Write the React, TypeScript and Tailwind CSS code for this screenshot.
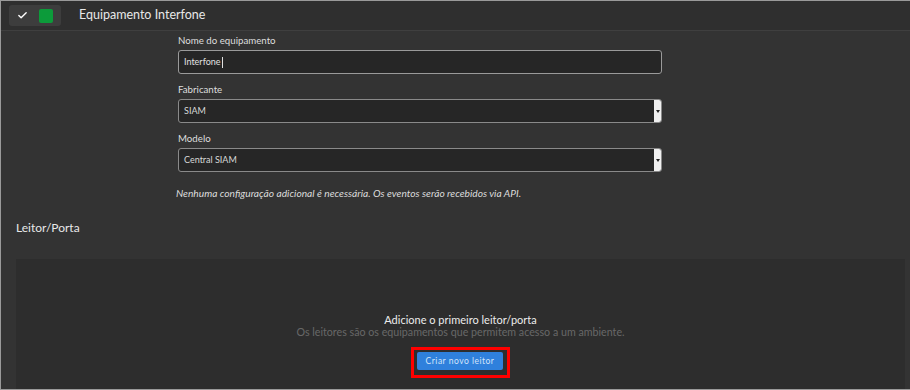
import { Check } from 'lucide-react';

function SelectField({ value }: { value: string }) {
  return (
    <div className="flex h-[24px] items-stretch rounded-[3px] border border-[#8a8a8a] bg-[#262626]">
      <div className="flex flex-1 items-center px-[5px] text-[9px] text-[#d8d8d8]">{value}</div>
      <div className="flex w-[7px] items-center justify-center rounded-r-[2px] bg-[#f0f0f0]">
        <div className="h-0 w-0 border-x-[2px] border-t-[3px] border-x-transparent border-t-[#222]"></div>
      </div>
    </div>
  );
}

export default function App() {
  return (
    <div
      className="flex h-[390px] w-[910px] flex-col overflow-hidden border-l border-t border-b border-[#9a9a9a] bg-[#333333] text-[#e6e6e6]"
      style={{ fontFamily: 'Lato, "Open Sans", sans-serif' }}
    >
      {/* Header */}
      <div className="flex h-[30px] shrink-0 items-center gap-[18px] border-b border-[#3f3f3f] bg-[#2f2f2f] pl-[8px]">
        <div className="flex h-[21px] w-[52px] items-center gap-[11px] rounded-[3px] bg-[#3d3d3d] pl-[8px]">
          <Check className="h-[11px] w-[11px] text-white" strokeWidth={3} />
          <div className="h-[14px] w-[14px] rounded-[2px] bg-[#0c9b3a]"></div>
        </div>
        <span className="text-[12.5px] text-[#e8e8e8]">Equipamento Interfone</span>
      </div>

      {/* Form */}
      <div className="ml-[177px] flex w-[484px] flex-col pt-[2px]">
        <label className="text-[9.7px] leading-[14px] text-[#dedede]">Nome do equipamento</label>
        <div className="mt-[3px] flex h-[24px] items-center rounded-[3px] border border-[#9a9a9a] bg-[#262626] px-[5px] text-[9px] text-[#e0e0e0]">
          Interfone<span className="ml-[1px] h-[11px] w-px bg-[#e0e0e0]"></span>
        </div>
        <label className="mt-[8px] text-[9.7px] leading-[14px] text-[#dedede]">Fabricante</label>
        <div className="mt-[3px]">
          <SelectField value="SIAM" />
        </div>
        <label className="mt-[8px] text-[9.7px] leading-[14px] text-[#dedede]">Modelo</label>
        <div className="mt-[3px]">
          <SelectField value="Central SIAM" />
        </div>
        <p className="-ml-[2px] mt-[15px] text-[10.2px] leading-[13px] italic text-[#dcdcdc]">
          Nenhuma configuração adicional é necessária. Os eventos serão recebidos via API.
        </p>
      </div>

      <h2 className="ml-[15px] mt-[20px] text-[12px] leading-[16px] text-[#e8e8e8]">Leitor/Porta</h2>

      {/* Empty state panel */}
      <div className="ml-[15px] mr-[5px] mt-[23px] flex flex-1 flex-col items-center bg-[#2d2d2d] pt-[54px]">
        <div className="text-[11px] leading-[13px] text-[#ececec]">Adicione o primeiro leitor/porta</div>
        <div className="text-[10.7px] leading-[12px] text-[#686868]">
          Os leitores são os equipamentos que permitem acesso a um ambiente.
        </div>
        <div className="mt-[9px] border-[3px] border-[#ff0000] pb-[5px] pl-[3px] pr-[4px] pt-[2px]">
          <button className="block h-[18px] rounded-[2px] bg-[#2f80dc] px-[9px] text-[8.5px] leading-[18px] tracking-[0.5px] text-[#d3e4fa]">
            Criar novo leitor
          </button>
        </div>
      </div>
    </div>
  );
}
